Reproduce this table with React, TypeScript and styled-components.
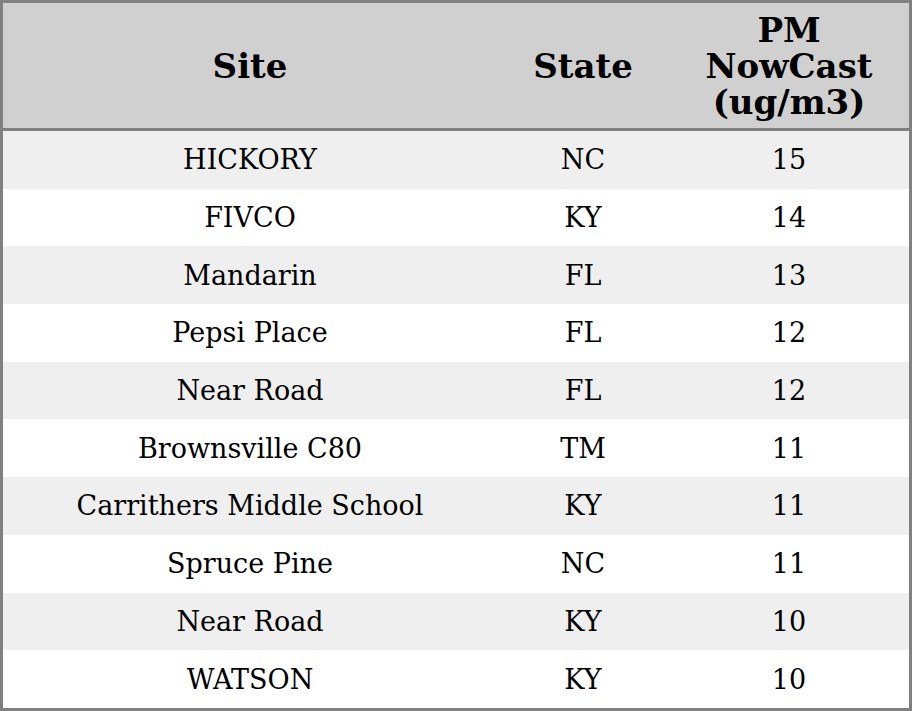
import React from 'react';
import styled, { createGlobalStyle } from 'styled-components';

const GlobalStyle = createGlobalStyle`
	html, body {
		margin: 0;
		padding: 0;
		background: #fff;
	}
`;

const Table = styled.table`
	width: 912px;
	height: 711px;
	border: 3px solid #808080;
	border-spacing: 0;
	box-sizing: border-box;
	table-layout: fixed;
	font-family: 'DejaVu Serif', serif;
	color: #000;
`;

const HeadCell = styled.th<{ $width: number }>`
	box-sizing: border-box;
	width: ${(p) => p.$width}px;
	height: 128px;
	padding: 0;
	background: #d0d0d0;
	border-bottom: 3px solid #808080;
	font-size: 34px;
	font-weight: bold;
	line-height: 36px;
	text-align: center;
	vertical-align: middle;
`;

const Row = styled.tr<{ $striped: boolean }>`
	background: ${(p) => (p.$striped ? '#efefef' : '#ffffff')};
`;

const Cell = styled.td`
	padding: 0;
	font-size: 27px;
	text-align: center;
	vertical-align: middle;
`;

const rows = [
	['HICKORY', 'NC', '15'],
	['FIVCO', 'KY', '14'],
	['Mandarin', 'FL', '13'],
	['Pepsi Place', 'FL', '12'],
	['Near Road', 'FL', '12'],
	['Brownsville C80', 'TM', '11'],
	['Carrithers Middle School', 'KY', '11'],
	['Spruce Pine', 'NC', '11'],
	['Near Road', 'KY', '10'],
	['WATSON', 'KY', '10'],
];

const App = () => {
	return (
		<>
			<GlobalStyle />
			<Table>
				<thead>
					<tr>
						<HeadCell $width={494}>Site</HeadCell>
						<HeadCell $width={172}>State</HeadCell>
						<HeadCell $width={240}>
							PM
							<br />
							NowCast
							<br />
							(ug/m3)
						</HeadCell>
					</tr>
				</thead>
				<tbody>
					{rows.map((r, i) => (
						<Row key={i} $striped={i % 2 === 0}>
							<Cell>{r[0]}</Cell>
							<Cell>{r[1]}</Cell>
							<Cell>{r[2]}</Cell>
						</Row>
					))}
				</tbody>
			</Table>
		</>
	);
};

export default App;
